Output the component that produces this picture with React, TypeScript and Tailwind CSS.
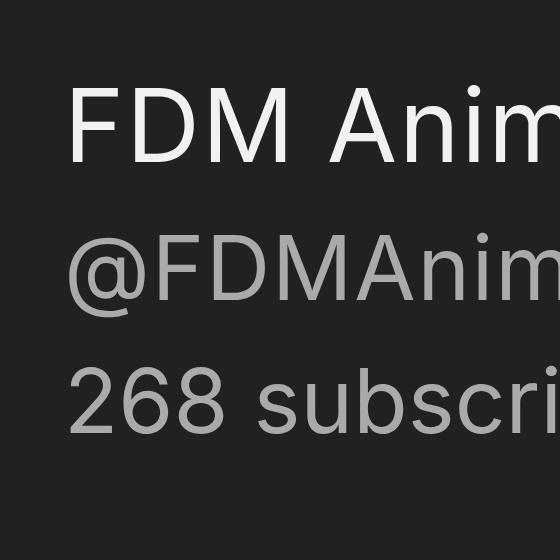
export default function App() {
  return (
    <div className="w-[560px] h-[560px] overflow-hidden bg-[#212121] font-['Inter',sans-serif]">
      <div className="flex flex-col pl-[64px] pt-[73px] whitespace-nowrap">
        <h1 className="text-[102px] leading-[104px] tracking-[0.02em] text-[#f1f1f1] font-normal">FDM Animations</h1>
        <div className="mt-[46px] text-[89px] leading-[89px] tracking-[0.02em] text-[#aaaaaa]">@FDMAnimations</div>
        <div className="mt-[44px] text-[89px] leading-[89px] text-[#aaaaaa]">268 subscribers</div>
      </div>
    </div>
  );
}
